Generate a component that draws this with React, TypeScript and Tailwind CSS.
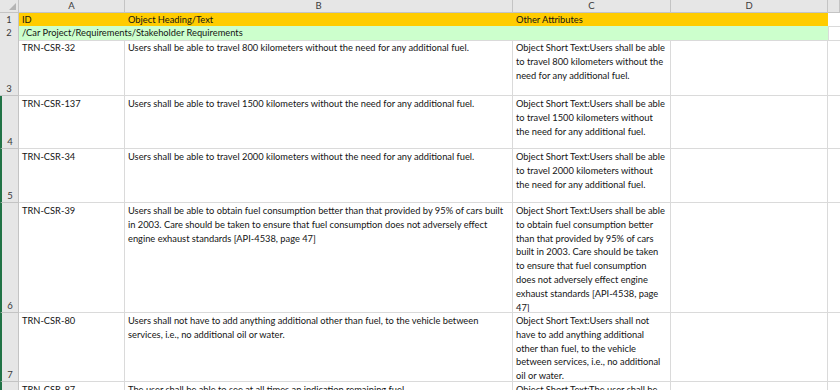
import React from "react";

type Row = { n: number; h: number; id: string; b: string[]; c: string[] };

const rows: Row[] = [
  { n: 3, h: 56, id: "TRN-CSR-32", b: ["Users shall be able to travel 800 kilometers without the need for any additional fuel."], c: ["Object Short Text:Users shall be able", "to travel 800 kilometers without the", "need for any additional fuel."] },
  { n: 4, h: 53, id: "TRN-CSR-137", b: ["Users shall be able to travel 1500 kilometers without the need for any additional fuel."], c: ["Object Short Text:Users shall be able", "to travel 1500 kilometers without", "the need for any additional fuel."] },
  { n: 5, h: 54, id: "TRN-CSR-34", b: ["Users shall be able to travel 2000 kilometers without the need for any additional fuel."], c: ["Object Short Text:Users shall be able", "to travel 2000 kilometers without", "the need for any additional fuel."] },
  { n: 6, h: 110, id: "TRN-CSR-39", b: ["Users shall be able to obtain fuel consumption better than that provided by 95% of cars built", "in 2003. Care should be taken to ensure that fuel consumption does not adversely effect", "engine exhaust standards [API-4538, page 47]"], c: ["Object Short Text:Users shall be able", "to obtain fuel consumption better", "than that provided by 95% of cars", "built in 2003. Care should be taken", "to ensure that fuel consumption", "does not adversely effect engine", "exhaust standards [API-4538, page", "47]"] },
  { n: 7, h: 69, id: "TRN-CSR-80", b: ["Users shall not have to add anything additional other than fuel, to the vehicle between", "services, i.e., no additional oil or water."], c: ["Object Short Text:Users shall not", "have to add anything additional", "other than fuel, to the vehicle", "between services, i.e., no additional", "oil or water."] },
  { n: 8, h: 60, id: "TRN-CSR-87", b: ["The user shall be able to see at all times an indication remaining fuel."], c: ["Object Short Text:The user shall be", "able to see at all times an", "indication remaining fuel."] },
];

const font = { fontFamily: "Lato, 'Open Sans', sans-serif" };

function Lines({ lines }: { lines: string[] }) {
  return (
    <div className="pl-[3px] pt-[1px] leading-[13.8px] text-[9.3px] text-[#141414] whitespace-nowrap overflow-hidden">
      {lines.map((l, i) => (
        <div key={i}>{l}</div>
      ))}
    </div>
  );
}

export default function App() {
  const cols = "grid grid-cols-[19px_106px_388px_158px_157px_1fr]";
  const cell = "border-r border-b border-[#dadada] overflow-hidden";
  return (
    <div className="w-[840px] h-[390px] overflow-hidden bg-white" style={font}>
      {/* column header */}
      <div className={`${cols} h-[13px] bg-[#e6e6e6] text-[9.5px] text-[#3a3a3a] leading-[12px]`}>
        <div className="relative border-r border-b border-[#c4c4c4]">
          <div className="absolute right-[2px] bottom-[2px] w-0 h-0 border-l-[7px] border-l-transparent border-b-[7px] border-b-[#b4b4b4]" />
        </div>
        {["A", "B", "C", "D", ""].map((l, i) => (
          <div key={i} className="border-r border-b border-[#c4c4c4] text-center">{l}</div>
        ))}
      </div>
      {/* row 1 */}
      <div className={`${cols} h-[13px] text-[9.3px] leading-[13px] text-[#141414]`}>
        <div className="bg-[#e6e6e6] border-r border-b border-[#c4c4c4] text-center text-[#3a3a3a]">1</div>
        <div className="bg-[#ffcc00] pl-[3px] border-b border-[#ffcc00]">ID</div>
        <div className="bg-[#ffcc00] pl-[3px] border-b border-[#ffcc00]">Object Heading/Text</div>
        <div className="bg-[#ffcc00] pl-[3px] border-b border-[#ffcc00]">Other Attributes</div>
        <div className="bg-[#ffcc00] border-b border-[#ffcc00]" />
        <div className="border-b border-[#dadada]" />
      </div>
      {/* row 2 */}
      <div className={`${cols} h-[14px] text-[9.3px] leading-[14px] text-[#141414]`}>
        <div className="bg-[#e6e6e6] border-r border-b border-[#c4c4c4] text-center text-[#3a3a3a]">2</div>
        <div className="col-span-4 bg-[#ccffcc] pl-[3px] border-b border-[#dadada] whitespace-nowrap">/Car Project/Requirements/Stakeholder Requirements</div>
        <div className="border-l border-b border-[#dadada]" />
      </div>
      {rows.map((r) => (
        <div key={r.n} className={cols} style={{ height: r.h }}>
          <div className={`bg-[#e6e6e6] border-r border-b border-[#c4c4c4] flex items-end justify-center text-[9.5px] leading-[13px] text-[#3a3a3a] ${r.n >= 4 ? "border-l-2 border-l-[#217346]" : ""}`}>
            {r.n}
          </div>
          <div className={cell}><Lines lines={[r.id]} /></div>
          <div className={cell}><Lines lines={r.b} /></div>
          <div className={cell}><Lines lines={r.c} /></div>
          <div className={cell} />
          <div className="border-b border-[#dadada]" />
        </div>
      ))}
    </div>
  );
}
